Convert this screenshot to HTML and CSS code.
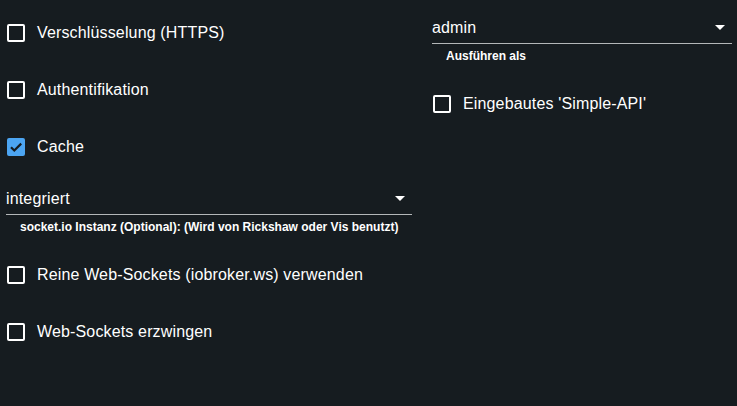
FILE: index.html
```html
<!DOCTYPE html>
<html lang="de">
<head>
  <meta charset="UTF-8">
  <meta name="viewport" content="width=device-width, initial-scale=1.0">
  <title>Web-Einstellungen</title>
  <link rel="stylesheet" href="styles.css">
</head>
<body>
  <div class="settings">
    <!-- left column -->
    <div class="column">
      <label class="check-row">
        <span class="box"></span>
        <span class="check-label">Verschlüsselung (HTTPS)</span>
      </label>
      <label class="check-row">
        <span class="box"></span>
        <span class="check-label">Authentifikation</span>
      </label>
      <label class="check-row">
        <span class="box checked">
          <svg viewBox="0 0 18 18" width="18" height="18"><path d="M4 9.2l3.3 3.3L14.2 5.6" fill="none" stroke="#161c20" stroke-width="2.2"/></svg>
        </span>
        <span class="check-label">Cache</span>
      </label>
      <div class="select">
        <span class="select-value">integriert</span>
        <span class="arrow"></span>
      </div>
      <p class="helper">socket.io Instanz (Optional): (Wird von Rickshaw oder Vis benutzt)</p>
      <label class="check-row">
        <span class="box"></span>
        <span class="check-label">Reine Web-Sockets (iobroker.ws) verwenden</span>
      </label>
      <label class="check-row">
        <span class="box"></span>
        <span class="check-label">Web-Sockets erzwingen</span>
      </label>
    </div>

    <!-- right column -->
    <div class="column">
      <div class="select">
        <span class="select-value">admin</span>
        <span class="arrow"></span>
      </div>
      <p class="helper">Ausführen als</p>
      <label class="check-row">
        <span class="box"></span>
        <span class="check-label">Eingebautes 'Simple-API'</span>
      </label>
    </div>
  </div>
</body>
</html>
```

FILE: styles.css
```css
/* Basic resets */
* {
  margin: 0;
  padding: 0;
  box-sizing: border-box;
  font-family: "Liberation Sans", Arial, sans-serif;
}
body, html {
  height: 100%;
  background: #161c20;
  color: #fff;
}
/* Two column layout */
.settings {
  display: grid;
  grid-template-columns: 406px 300px;
  column-gap: 20px;
  padding: 4px 5px 0 6px;
}
.column {
  display: flex;
  flex-direction: column;
}
/* Checkbox rows */
.check-row {
  display: flex;
  align-items: center;
  height: 57px;
  font-size: 16px;
  line-height: 19px;
  letter-spacing: 0.15px;
}
.box {
  width: 18px;
  height: 18px;
  margin-left: 1px;
  margin-right: 12px;
  border: 2px solid #fff;
  border-radius: 2px;
  flex-shrink: 0;
}
.box.checked {
  background: #4ca5f2;
  border-color: #4ca5f2;
  position: relative;
}
.box.checked svg {
  position: absolute;
  left: -2px;
  top: -2px;
}
/* Select field */
.select {
  display: flex;
  align-items: center;
  justify-content: space-between;
  padding: 14px 7px 6px 0;
  border-bottom: 1px solid #b4b7b9;
  font-size: 16px;
  line-height: 19px;
  letter-spacing: 0.15px;
}
.arrow {
  width: 0;
  height: 0;
  border-left: 5px solid transparent;
  border-right: 5px solid transparent;
  border-top: 5px solid #fff;
}
.helper {
  margin: 5px 0 12px 14px;
  font-size: 12px;
  line-height: 14px;
  font-weight: bold;
}
```
